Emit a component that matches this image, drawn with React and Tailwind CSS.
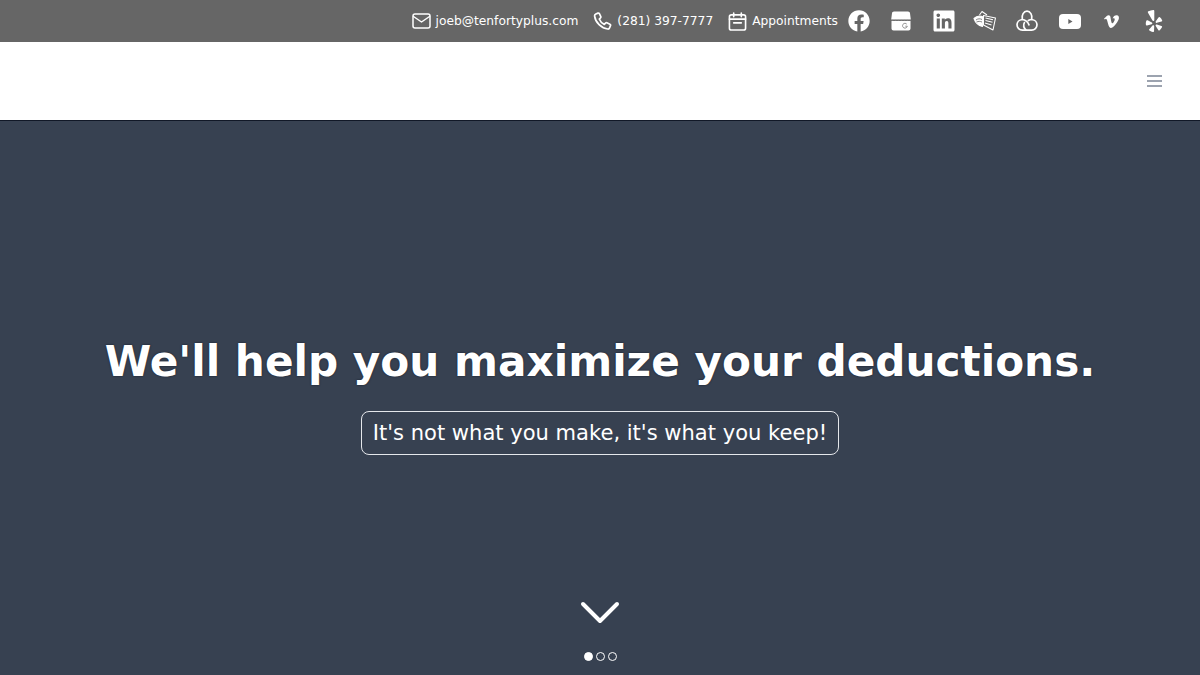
import React from "react";
import { FaFacebook, FaLinkedin, FaVimeoV, FaYelp } from "react-icons/fa";

const MailIcon = () => (
  <svg viewBox="0 0 19 16" className="h-[16px] w-[19px]" fill="none" stroke="white" strokeWidth="1.500" strokeLinejoin="round" strokeLinecap="round">
    <rect x="1" y="1" width="17" height="14" rx="2" />
    <path d="M1.500 3.500l8 5.500 8-5.500" />
  </svg>
);

const PhoneIcon = () => (
  <svg viewBox="0 0 20 20" className="h-[19px] w-[19px]" fill="none" stroke="white" strokeWidth="1.800" strokeLinejoin="round" strokeLinecap="round">
    <path d="M3 2.200l2.200-1c.6-.2 1.200 0 1.500.6l1.500 3c.2.500.1 1-.3 1.400L6.600 7.400c.9 2.400 3 4.600 5.300 5.600l1.300-1.300c.4-.4.900-.5 1.400-.3l3.200 1.500c.6.300.8 1 .6 1.500l-.9 2.200c-.3.900-1.100 1.400-2 1.300C8.900 17.300 2.500 11 1.700 4.300 1.600 3.400 2.100 2.600 3 2.200z" />
  </svg>
);

const CalendarIcon = () => (
  <svg viewBox="0 0 20 20" className="h-[19px] w-[19px]" fill="none" stroke="white" strokeWidth="1.700" strokeLinecap="round" strokeLinejoin="round">
    <rect x="1.500" y="3" width="17" height="16" rx="2" />
    <path d="M6 1v4M14 1v4M1.500 7.500h17M6 11.500h8" />
  </svg>
);

// google business storefront
const StoreIcon = () => (
  <svg viewBox="0 0 20 20" className="h-[20px] w-[20px]" fill="white">
    <path d="M3 .5h14c1.100 0 1.900.8 2 1.800l.8 6.200H.2L1 2.300C1.100 1.300 1.900.5 3 .5z" />
    <path d="M.5 10h19v7.500c0 1.200-.9 2-2 2h-15c-1.100 0-2-.8-2-2z" />
    <path d="M.5 9.300h19" stroke="#8a8a8a" strokeWidth="0.800" strokeDasharray="2 1" />
    <path d="M15.800 13.200a2.400 2.400 0 1 0 .5 2h-2" fill="none" stroke="#8a8a8a" strokeWidth="0.900" />
  </svg>
);

// stack of bills
const BillsIcon = () => (
  <svg viewBox="0 0 24 22" className="h-[22px] w-[24px]" fill="none" stroke="white" strokeWidth="1.100" strokeLinejoin="round">
    <path d="M1 8.500C3.500 6 7 5.500 10.500 7l-1 9.500C5.500 15.500 2.500 13 1 8.500z" fill="white" />
    <path d="M3 10c2-1.500 4-1.500 6-.5M3.500 12c2-.8 3.500-.8 5.500 0" stroke="#666666" strokeWidth="0.800" />
    <path d="M6.500 5L9 1.500l5 3.500" />
    <path d="M10.500 5.500L22.500 8l-2.500 12-9.500-5z" />
    <path d="M12.500 8l7.500 1.800M12.500 10.500l7 1.800M12 13l6.500 2" />
  </svg>
);

// three interlaced lobes
const CloudIcon = () => (
  <svg viewBox="0 0 22 22" className="h-[22px] w-[22px]" fill="none" stroke="white" strokeWidth="1.700" strokeLinecap="round">
    <path d="M6.300 9.500C5.300 5 7.800 1.200 11 1.200s5.700 3.800 4.700 8.300c3.300.3 5.300 2.700 5.300 5.300 0 3-2.400 5.400-5.400 5.400H6.400C3.400 20.200 1 17.800 1 14.800c0-2.600 2-5 5.300-5.300z" />
    <path d="M6.300 9.500c3 .3 5.500 2.500 6.700 5.300M15.700 9.500c-1.200 0-2.400.4-3.400 1M8.400 12.600c-1.200 2.200-.8 5 1.600 7.400" />
  </svg>
);

const YoutubeIcon = () => (
  <svg viewBox="0 0 22 15" className="h-[15px] w-[22px]">
    <rect width="22" height="15" rx="4" fill="white" />
    <path d="M9.300 5l4.200 2.500-4.200 2.500z" fill="#666666" />
  </svg>
);

const contacts = [
  { Icon: MailIcon, label: "joeb@tenfortyplus.com" },
  { Icon: PhoneIcon, label: "(281) 397-7777" },
  { Icon: CalendarIcon, label: "Appointments" },
];

export default function App() {
  return (
    <div className="flex h-[675px] flex-col overflow-hidden font-['DejaVu_Sans',sans-serif]">
      {/* top contact bar */}
      <div className="flex h-[42px] items-center justify-end bg-[#666666] pr-[26px] text-white">
        <div className="flex items-center gap-[15px] text-[12.250px]">
          {contacts.map(({ Icon, label }) => (
            <span key={label} className="flex items-center gap-[5px]">
              <Icon />
              {label}
            </span>
          ))}
        </div>
        <div className="flex items-center">
          <span className="flex w-[42px] justify-center"><FaFacebook size={22} /></span>
          <span className="flex w-[42px] justify-center"><StoreIcon /></span>
          <span className="flex w-[42px] justify-center pl-[1px]"><FaLinkedin size={24} /></span>
          <span className="flex w-[42px] justify-center"><BillsIcon /></span>
          <span className="flex w-[42px] justify-center"><CloudIcon /></span>
          <span className="flex w-[42px] justify-center pl-[1px]"><YoutubeIcon /></span>
          <span className="flex w-[42px] justify-center"><FaVimeoV size={17} /></span>
          <span className="flex w-[42px] justify-center pl-[2px]"><FaYelp size={22} /></span>
        </div>
      </div>

      {/* nav */}
      <div className="flex h-[79px] items-center justify-end border-b border-[#111827] bg-white pr-[38px]">
        <div className="flex w-[15px] flex-col gap-[3px]">
          <span className="h-[2px] bg-[#9ca3af]" />
          <span className="h-[2px] bg-[#9ca3af]" />
          <span className="h-[2px] bg-[#9ca3af]" />
        </div>
      </div>

      {/* hero */}
      <div className="relative flex flex-1 flex-col items-center justify-center bg-[#374151] text-white">
        <h1 className="text-[42.200px] leading-[42px] font-bold [text-shadow:0_0_2px_#111827]">We'll help you maximize your deductions.</h1>
        <p className="mt-[28px] rounded-[8px] border border-[#e5e7eb] px-[11px] py-[4px] text-[21.050px] leading-[34px]">
          It's not what you make, it's what you keep!
        </p>
        <div className="absolute bottom-[14px] left-0 flex w-full flex-col items-center">
          <svg viewBox="0 0 40 24" className="h-[24px] w-[40px]" fill="none" stroke="white" strokeWidth="4" strokeLinecap="round" strokeLinejoin="round">
            <path d="M3 3l17 17L37 3" />
          </svg>
          <div className="mt-[27px] flex gap-[3px]">
            <span className="h-[9px] w-[9px] rounded-full border border-white bg-white" />
            <span className="h-[9px] w-[9px] rounded-full border border-white" />
            <span className="h-[9px] w-[9px] rounded-full border border-white" />
          </div>
        </div>
      </div>
    </div>
  );
}
